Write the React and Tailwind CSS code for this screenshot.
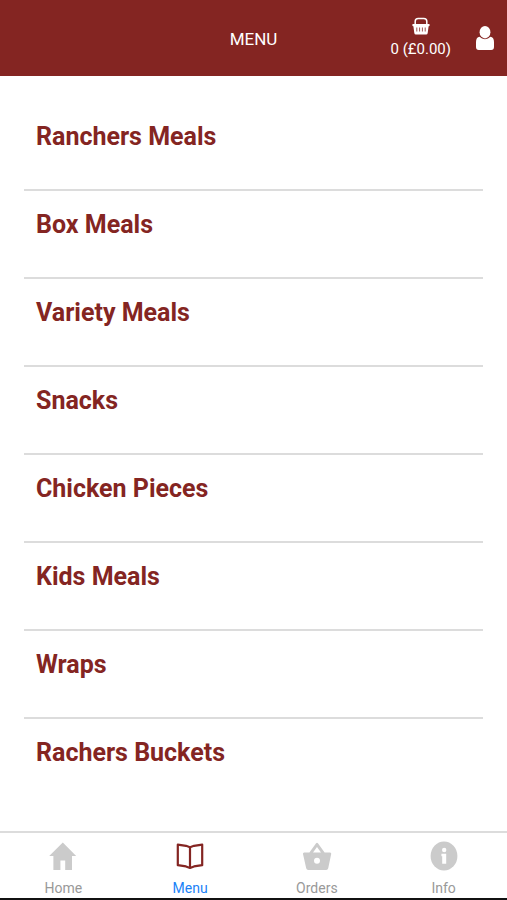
import { useState } from "react";

const categories = [
  "Ranchers Meals",
  "Box Meals",
  "Variety Meals",
  "Snacks",
  "Chicken Pieces",
  "Kids Meals",
  "Wraps",
  "Rachers Buckets",
];

const HomeIcon = () => (
  <svg viewBox="0 0 30 30" className="size-[30px]" fill="#cbcbcb" aria-hidden="true">
    <path d="M14.8 1.6 28.2 15H24v14h-6.8v-9.6h-4.8V29H5.4V15H1.2z" />
  </svg>
);

const BookIcon = () => (
  <svg viewBox="0 0 30 30" className="size-[30px]" fill="none" stroke="#842522" strokeWidth="2.2" strokeLinejoin="round" aria-hidden="true">
    <path d="M15 6.2 11 4.8 2.8 3.6V24.2l8.2 1.2 4 1.6 4-1.6 8.2-1.2V3.6L19 4.8zV27" />
  </svg>
);

const OrdersIcon = () => (
  <svg viewBox="0 0 30 30" className="size-[30px]" fill="#cbcbcb" aria-hidden="true">
    <path
      fillRule="evenodd"
      d="M13.900 2.400q1.100-1.500 2.200 0L22.600 11.400H28q1.500 0 1.200 1.500L26.200 27.300Q25.800 29 24.200 29H6.200Q4.600 29 4.200 27.300L1 12.900Q.8 11.400 2.200 11.400H7.400zM15 6 11 11.400h8zM15 16.800a3 3 0 1 0 0 6 3 3 0 1 0 0-6z"
    />
  </svg>
);

const InfoIcon = () => (
  <svg viewBox="0 0 30 30" className="size-[30px]" aria-hidden="true">
    <ellipse cx="15" cy="15" rx="13.4" ry="14.5" fill="#cbcbcb" />
    <circle cx="15.2" cy="9" r="2.2" fill="#fff" />
    <path d="M12.4 12.8h4.8V22.8h-4V15.2h-.8z" fill="#fff" />
  </svg>
);

const BasketIcon = () => (
  <svg viewBox="0 0 18 18" className="size-[18px]" aria-hidden="true">
    <path d="M3.2 8V4.200Q3.2 1.400 6.200 1.400h5.600q3 0 3 2.800V8" fill="none" stroke="#fff" strokeWidth="1.5" />
    <path d="M1 7h16q.7 0 .7 1.100t-.7 1.100h-.4l-.9 6.800q-.2 1.500-1.600 1.500H3.900q-1.400 0-1.600-1.500L1.400 9.200H1Q.3 9.200.3 8.100T1 7z" fill="#fff" />
    <path d="M4.800 10.500v4M7.600 10.500v4M10.400 10.500v4M13.200 10.500v4" stroke="#9d5452" strokeWidth="1" />
  </svg>
);

const UserIcon = () => (
  <svg viewBox="0 0 20 26" className="h-[26px] w-5" fill="#fff" aria-hidden="true">
    <ellipse cx="10" cy="7.2" rx="5.4" ry="6.2" />
    <path d="M4.6 11.800q2.200 2.400 5.400 2.400t5.400-2.400q3.600.6 3.600 5.200v5q0 3-2.800 3H3.800Q1 25 1 22v-5q0-4.600 3.600-5.200z" />
  </svg>
);

const tabs = [
  { id: "home", label: "Home", Icon: HomeIcon },
  { id: "menu", label: "Menu", Icon: BookIcon },
  { id: "orders", label: "Orders", Icon: OrdersIcon },
  { id: "info", label: "Info", Icon: InfoIcon },
];

export default function App() {
  const [activeTab, setActiveTab] = useState("menu");

  return (
    <div className="flex min-h-screen flex-col bg-white font-['Roboto',sans-serif]">
      <header className="grid h-[76px] shrink-0 grid-cols-[1fr_auto_1fr] items-center bg-[#842522] text-white">
        <h1 className="col-start-2 pt-0.5 text-[17px] leading-6">MENU</h1>
        <div className="flex items-center justify-end gap-6 pr-3">
          <button type="button" className="flex flex-col items-center gap-1">
            <BasketIcon />
            <span className="text-[15px] leading-5">0 (£0.00)</span>
          </button>
          <button type="button" aria-label="Account">
            <UserIcon />
          </button>
        </div>
      </header>

      <main className="flex-1 px-6 pt-[27px]">
        <ul>
          {categories.map((name) => (
            <li key={name} className="border-b-2 border-[#dcdcdc] last:border-b-0">
              <a href="#" className="block h-[86px] px-3 pt-[18px] text-[25px] leading-8 font-bold text-[#842522]">
                {name}
              </a>
            </li>
          ))}
        </ul>
      </main>

      <nav className="sticky bottom-0 grid shrink-0 grid-cols-4 border-t-2 border-b-2 border-t-[#dcdcdc] border-b-[#111] bg-white pt-2">
        {tabs.map(({ id, label, Icon }) => (
          <button
            key={id}
            type="button"
            onClick={() => setActiveTab(id)}
            className="flex flex-col items-center gap-2"
          >
            <Icon />
            <span className={`text-[14px] leading-[19px] ${activeTab === id ? "text-[#1a82f7]" : "text-[#999]"}`}>
              {label}
            </span>
          </button>
        ))}
      </nav>
    </div>
  );
}
